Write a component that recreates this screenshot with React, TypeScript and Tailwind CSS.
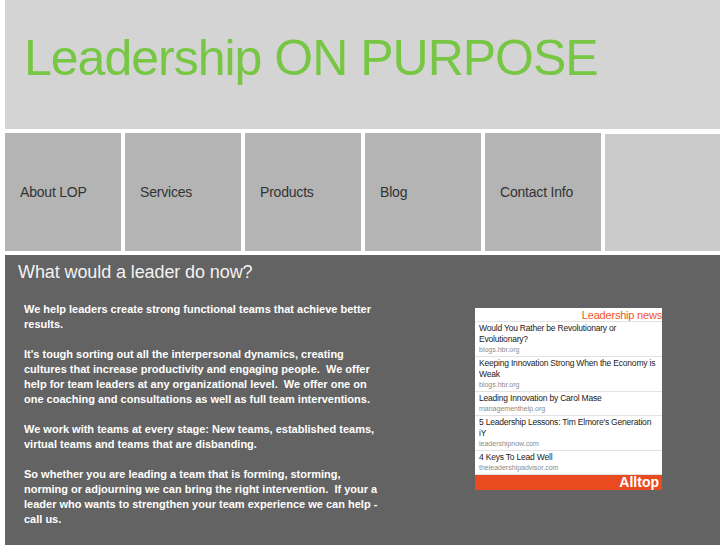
const navItems = ['About LOP', 'Services', 'Products', 'Blog', 'Contact Info'];

const news = [
  { title: 'Would You Rather be Revolutionary or Evolutionary?', source: 'blogs.hbr.org' },
  { title: 'Keeping Innovation Strong When the Economy is Weak', source: 'blogs.hbr.org' },
  { title: 'Leading Innovation by Carol Mase', source: 'managementhelp.org' },
  { title: "5 Leadership Lessons: Tim Elmore's Generation iY", source: 'leadershipnow.com' },
  { title: '4 Keys To Lead Well', source: 'theleadershipadvisor.com' },
];

function NewsWidget() {
  return (
    <div className="w-[187px] bg-white mt-[24px]">
      <div className="h-[14px] text-right text-[11px] leading-[14px] text-[#f0542a] tracking-[-0.2px] border-b border-[#e2e2e2]">
        Leadership news
      </div>
      {news.map((item) => (
        <div key={item.title} className="px-[4px] pt-[1px] pb-[2px] border-b border-[#e2e2e2]">
          <div className="text-[8.5px] leading-[11px] tracking-[-0.2px] text-[#222]">{item.title}</div>
          <div className="text-[7px] leading-[9px] text-[#8a8a8a]">{item.source}</div>
        </div>
      ))}
      <div className="h-[15px] bg-[#ea4a1f] text-right pr-[3px] text-white font-bold text-[14px] leading-[15px]">
        Alltop
      </div>
    </div>
  );
}

export default function App() {
  return (
    <div className="w-[727px] h-[545px] overflow-hidden bg-white font-['Liberation_Sans',Arial,sans-serif]">
      <div className="ml-[5px] w-[715px]">
        <header className="h-[129px] bg-[#d4d4d4] pl-[19px] pt-[29px]">
          <h1 className="text-[50px] leading-[58px] tracking-[-1px] text-[#77c745]">Leadership ON PURPOSE</h1>
        </header>

        <nav className="mt-[4px] flex gap-[4px] h-[118px]">
          {navItems.map((item) => (
            <div key={item} className="w-[116px] bg-[#b4b4b4] flex items-center pl-[15px] text-[14px] tracking-[-0.2px] text-[#333]">
              {item}
            </div>
          ))}
          <div className="flex-1 mt-[1px] bg-[#cbcbcb]"></div>
        </nav>

        <main className="mt-[4px] bg-[#636363] h-[300px] pl-[13px] pt-[5px]">
          <h2 className="text-[18px] leading-[24px] tracking-[-0.1px] text-[#f2f2f2]">What would a leader do now?</h2>
          <div className="flex">
            <div className="ml-[6px] w-[360px] mt-[18px] text-[11px] leading-[15px] font-bold text-white space-y-[15px]">
              <p>We help leaders create strong functional teams that achieve better results.</p>
              <p>
                It's tough sorting out all the interpersonal dynamics, creating cultures that increase productivity and engaging people.&nbsp; We offer help for team leaders at any organizational level.&nbsp; We offer one on one coaching and consultations as well as full team interventions.
              </p>
              <p>We work with teams at every stage: New teams, established teams, virtual teams and teams that are disbanding.</p>
              <p>
                So whether you are leading a team that is forming, storming, norming or adjourning we can bring the right intervention.&nbsp; If your a leader who wants to strengthen your team experience we can help - call us.
              </p>
            </div>
            <div className="ml-[91px]">
              <NewsWidget />
            </div>
          </div>
        </main>
      </div>
    </div>
  );
}
